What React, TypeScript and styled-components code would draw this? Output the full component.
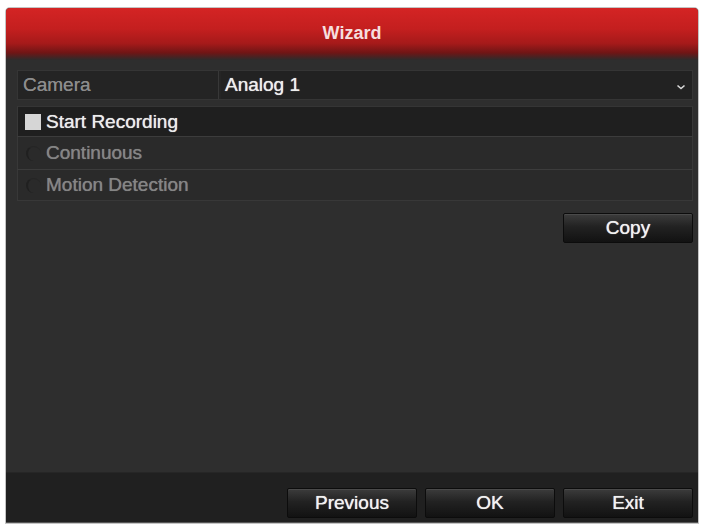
import styled, { createGlobalStyle } from "styled-components";

const GlobalStyle = createGlobalStyle`
  html, body {
    margin: 0;
    padding: 0;
    background: #ffffff;
  }
  body {
    font-family: "Liberation Sans", Arial, sans-serif;
  }
`;

const App = () => {
  return (
    <>
      <GlobalStyle />
      <Page>
        <Window>
          <TitleBar>Wizard</TitleBar>
          <Content>
            <SelectRow>
              <LabelCell>Camera</LabelCell>
              <ValueCell>
                <span>Analog 1</span>
                <svg width="10" height="6" viewBox="0 0 10 6">
                  <polyline
                    points="1.5,1.5 5,4.5 8.5,1.5"
                    fill="none"
                    stroke="#d8d8d8"
                    strokeWidth="1.6"
                  />
                </svg>
              </ValueCell>
            </SelectRow>

            <OptionRow $dark $height={31}>
              <CheckBox />
              <OptionText $active>Start Recording</OptionText>
            </OptionRow>
            <OptionRow $height={34}>
              <Radio />
              <OptionText>Continuous</OptionText>
            </OptionRow>
            <OptionRow $height={32}>
              <Radio />
              <OptionText>Motion Detection</OptionText>
            </OptionRow>

            <CopyBar>
              <Button>Copy</Button>
            </CopyBar>
          </Content>
          <Footer>
            <Button>Previous</Button>
            <Button>OK</Button>
            <Button>Exit</Button>
          </Footer>
        </Window>
      </Page>
    </>
  );
};

const Page = styled.div`
  width: 701px;
  height: 526px;
  padding: 8px 3px 3px 6px;
  box-sizing: border-box;
  overflow: hidden;
`;

const Window = styled.div`
  width: 692px;
  height: 515px;
  display: flex;
  flex-direction: column;
  border-radius: 4px 4px 0 0;
  overflow: hidden;
  box-shadow: 0 0 0 1px #c4c4c4;
  background: #2e2e2e;
`;

const TitleBar = styled.div`
  height: 52px;
  flex-shrink: 0;
  display: flex;
  align-items: center;
  justify-content: center;
  padding-bottom: 1px;
  box-sizing: border-box;
  background: linear-gradient(
    to bottom,
    #d42424 0%,
    #c41f1f 40%,
    #a61a1a 68%,
    #701515 86%,
    #2c2c2c 100%
  );
  color: #f6dede;
  font-size: 18px;
  font-weight: bold;
`;

const Content = styled.div`
  flex: 1;
  display: flex;
  flex-direction: column;
  padding: 10px 5px 0 11px;
  background: #2e2e2e;
`;

const SelectRow = styled.div`
  height: 30px;
  display: flex;
  gap: 2px;
  margin-bottom: 7px;
  background: #252525;
  border: 1px solid #353535;
  box-sizing: border-box;
`;

const LabelCell = styled.div`
  width: 201px;
  box-sizing: border-box;
  display: flex;
  align-items: center;
  padding-left: 5px;
  background: #242424;
  border-right: 1px solid #383838;
  color: #8c8c8c;
  font-size: 19px;
  text-shadow: 0 0 0.6px #8c8c8c;
`;

const ValueCell = styled.div`
  flex: 1;
  display: flex;
  align-items: center;
  justify-content: space-between;
  padding: 0 6px 0 4px;
  background: #222222;
  color: #eeeeee;
  font-size: 19px;
  text-shadow: 0 0 0.8px #eeeeee;

  svg {
    margin-top: 4px;
  }
`;

const OptionRow = styled.div<{ $dark?: boolean; $height: number }>`
  height: ${(p) => p.$height}px;
  display: flex;
  align-items: center;
  gap: 5px;
  padding-left: 6px;
  box-sizing: border-box;
  background: ${(p) => (p.$dark ? "#1f1f1f" : "#2a2a2a")};
  border: 1px solid #383838;
  border-top-color: ${(p) => (p.$dark ? "#353535" : "#3c3c3c")};
  margin-top: -1px;
`;

const CheckBox = styled.div`
  width: 16px;
  height: 16px;
  background: #d6d6d6;
  margin-left: 1px;
`;

const Radio = styled.div`
  width: 15px;
  height: 15px;
  margin-left: 2px;
  border-radius: 50%;
  border-left: 2px solid #1e1e1e;
  border-top: 1px solid #252525;
  box-sizing: border-box;
  opacity: 0.8;
`;

const OptionText = styled.span<{ $active?: boolean }>`
  font-size: 19px;
  color: ${(p) => (p.$active ? "#ececec" : "#858585")};
  text-shadow: 0 0 0.7px ${(p) => (p.$active ? "#ececec" : "#858585")};
`;

const CopyBar = styled.div`
  display: flex;
  justify-content: flex-end;
  margin-top: 12px;
`;

const Button = styled.div`
  width: 130px;
  height: 30px;
  display: flex;
  align-items: center;
  justify-content: center;
  box-sizing: border-box;
  border: 1px solid #0c0c0c;
  border-radius: 2px;
  background: linear-gradient(to bottom, #3c3c3c 0%, #222222 45%, #121212 100%);
  box-shadow: inset 0 1px 0 rgba(255, 255, 255, 0.08);
  color: #f2f2f2;
  font-size: 19px;
  text-shadow: 0 0 0.8px #f2f2f2;
`;

const Footer = styled.div`
  height: 51px;
  flex-shrink: 0;
  display: flex;
  justify-content: flex-end;
  align-items: flex-start;
  gap: 8px;
  padding: 15px 5px 0 0;
  box-sizing: border-box;
  background: #202020;
  border-top: 1px solid #262626;
  border-bottom: 1px solid #555555;
`;

export default App;
